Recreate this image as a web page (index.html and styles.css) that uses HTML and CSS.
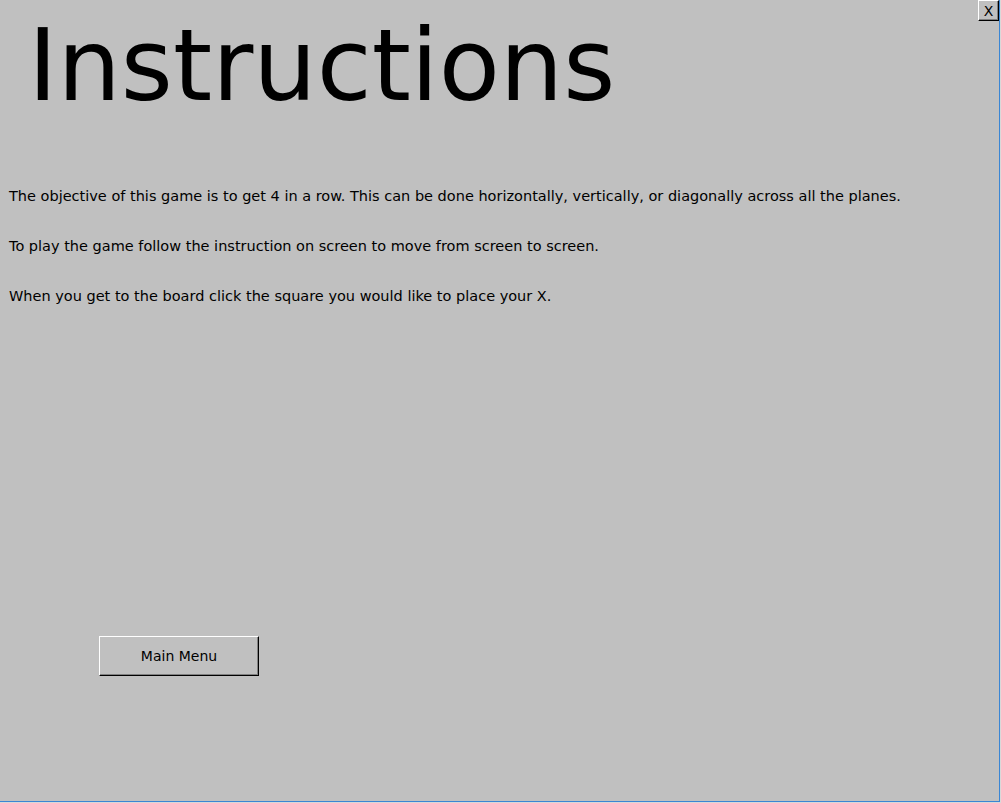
FILE: index.html
```html
<!DOCTYPE html>
<html>
<head>
<meta charset="utf-8">
<link rel="stylesheet" href="styles.css">
</head>
<body>
<div class="window">
  <button class="close-btn">X</button>
  <h1 class="title">Instructions</h1>
  <div class="text">
    <p>The objective of this game is to get 4 in a row. This can be done horizontally, vertically, or diagonally across all the planes.</p>
    <p>To play the game follow the instruction on screen to move from screen to screen.</p>
    <p>When you get to the board click the square you would like to place your X.</p>
  </div>
  <button class="menu-btn">Main Menu</button>
</div>
</body>
</html>
```
FILE: styles.css
```css
html, body {
  margin: 0;
  padding: 0;
  background: #d9d9d9;
}
body {
  width: 1001px;
  height: 803px;
  overflow: hidden;
  font-family: "DejaVu Sans", sans-serif;
}
.window {
  position: relative;
  box-sizing: border-box;
  width: 1000px;
  height: 802px;
  background: #c0c0c0;
  border-right: 1px solid #3a86d4;
  border-bottom: 1px solid #3a86d4;
  display: flex;
  flex-direction: column;
  align-items: flex-start;
}
.close-btn {
  position: absolute;
  top: 0;
  left: 978px;
  width: 21px;
  height: 21px;
  margin: 0;
  padding: 0;
  box-sizing: border-box;
  background: #c0c0c0;
  border-top: 1px solid #ffffff;
  border-left: 1px solid #ffffff;
  border-right: 1px solid #000000;
  border-bottom: 1px solid #000000;
  box-shadow: inset -1px -1px 0 #808080;
  font-family: "DejaVu Sans", sans-serif;
  font-size: 14px;
  line-height: 18px;
  color: #000;
}
.title {
  margin: 7px 0 0 28px;
  font-size: 100px;
  font-weight: normal;
  line-height: normal;
  color: #000;
}
.text {
  margin-top: 64px;
  padding-left: 9px;
  font-size: 14.5px;
  color: #000;
}
.text p {
  margin: 0 0 33px 0;
  line-height: 17px;
}
.menu-btn {
  margin: 298px 0 0 99px;
  width: 160px;
  height: 40px;
  box-sizing: border-box;
  background: #c0c0c0;
  border-top: 1px solid #ffffff;
  border-left: 1px solid #ffffff;
  border-right: 1px solid #000000;
  border-bottom: 1px solid #000000;
  box-shadow: inset -1px -1px 0 #808080;
  font-family: "DejaVu Sans", sans-serif;
  font-size: 14px;
  color: #000;
  padding: 0;
}
```
